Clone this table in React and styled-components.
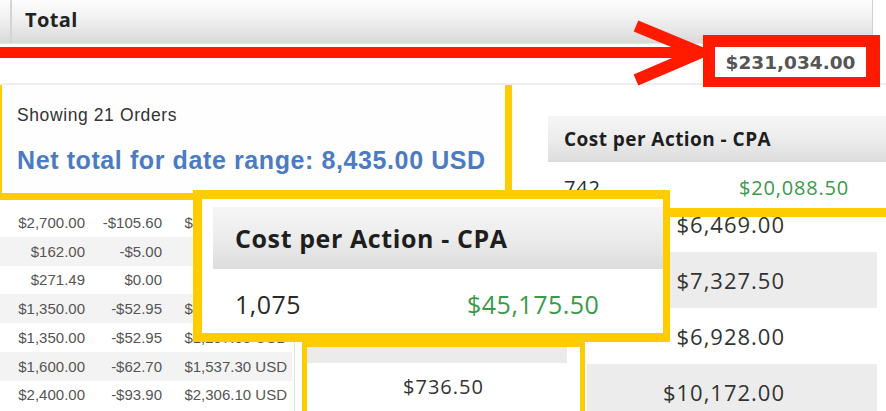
import React from "react";
import styled, { createGlobalStyle } from "styled-components";

const YELLOW = "#ffcc00";
const RED = "#ff1a00";
const GREEN = "#3a9a48";

const orders = [
  { gross: "$2,700.00", fee: "-$105.60", net: "$2,594.40 USD" },
  { gross: "$162.00", fee: "-$5.00", net: "$157.00 USD" },
  { gross: "$271.49", fee: "$0.00", net: "$271.49 USD" },
  { gross: "$1,350.00", fee: "-$52.95", net: "$1,297.05 USD" },
  { gross: "$1,350.00", fee: "-$52.95", net: "$1,297.05 USD" },
  { gross: "$1,600.00", fee: "-$62.70", net: "$1,537.30 USD" },
  { gross: "$2,400.00", fee: "-$93.90", net: "$2,306.10 USD" },
];

const campaignValues = ["$6,469.00", "$7,327.50", "$6,928.00", "$10,172.00"];

const GlobalStyle = createGlobalStyle`
  html, body {
    margin: 0;
    padding: 0;
    background: #ffffff;
  }
`;

const App = () => {
  return (
    <>
      <GlobalStyle />
      <Canvas>
        <TopStrip>
          <HeaderRow>
            <EdgeCell />
            <TotalCell>Total</TotalCell>
          </HeaderRow>
        </TopStrip>

        <Arrow viewBox="0 0 720 95" width="720" height="95">
          <line x1="0" y1="52.5" x2="700" y2="52.5" stroke={RED} strokeWidth="11" />
          <polyline
            points="636,26 700,52.5 636,80"
            fill="none"
            stroke={RED}
            strokeWidth="12"
            strokeLinejoin="miter"
          />
        </Arrow>

        <TotalBox>$231,034.00</TotalBox>

        <SmallCpa>
          <CpaHeader $small>Cost per Action - CPA</CpaHeader>
          <CpaRow $small>
            <span>742</span>
            <CpaMoney>$20,088.50</CpaMoney>
          </CpaRow>
        </SmallCpa>

        <OrdersPanel>
          <ShowingText>Showing 21 Orders</ShowingText>
          <NetTotal>Net total for date range: 8,435.00 USD</NetTotal>
        </OrdersPanel>

        <OrdersTable>
          {orders.map((o, i) => (
            <OrderRow key={i} $shaded={i % 2 === 1}>
              <OrderCell>{o.gross}</OrderCell>
              <OrderCell>{o.fee}</OrderCell>
              <OrderCell>{o.net}</OrderCell>
            </OrderRow>
          ))}
        </OrdersTable>

        <ValuesPanel>
          <ValuesList>
            {campaignValues.map((v, i) => (
              <ValueRow key={v} $shaded={i % 2 === 1}>
                {v}
              </ValueRow>
            ))}
          </ValuesList>
        </ValuesPanel>

        <DealPanel>
          <DealStripe />
          <DealValue>$736.50</DealValue>
        </DealPanel>

        <BigCpa>
          <CpaHeader>Cost per Action - CPA</CpaHeader>
          <CpaRow>
            <span>1,075</span>
            <CpaMoney>$45,175.50</CpaMoney>
          </CpaRow>
        </BigCpa>
      </Canvas>
    </>
  );
};

const Canvas = styled.div`
  position: relative;
  width: 886px;
  height: 411px;
  overflow: hidden;
  background: #ffffff;
  font-family: "Open Sans", "Liberation Sans", sans-serif;
`;

const TopStrip = styled.div`
  height: 85px;
  box-sizing: border-box;
  border-bottom: 2px solid #eeeeee;
`;

const HeaderRow = styled.div`
  display: flex;
  width: 873px;
  height: 44px;
  box-sizing: border-box;
  border-right: 1px solid #d2d2d2;
  border-bottom: 1px solid #e6e6e6;
  background: linear-gradient(#fdfdfd 0%, #f0f0f0 45%, #d9d9d9 100%);
`;

const EdgeCell = styled.div`
  width: 10px;
  border-right: 2px solid #d4d4d4;
`;

const TotalCell = styled.div`
  flex: 1;
  display: flex;
  align-items: center;
  padding-left: 13px;
  padding-bottom: 4px;
  font-size: 20px;
  font-weight: 700;
  letter-spacing: 0.4px;
  color: #222;
`;

const Arrow = styled.svg`
  position: absolute;
  left: 0;
  top: 0;
`;

const TotalBox = styled.div`
  position: absolute;
  left: 703px;
  top: 35px;
  width: 177px;
  height: 52px;
  box-sizing: border-box;
  border: 12px solid ${RED};
  border-bottom-width: 10px;
  border-right-width: 14px;
  background: #ffffff;
  display: flex;
  align-items: center;
  justify-content: center;
  font-family: "DejaVu Sans", sans-serif;
  font-weight: 700;
  font-size: 18.5px;
  color: #555;
`;

const OrdersPanel = styled.div`
  position: absolute;
  left: 0;
  top: 85px;
  width: 512px;
  height: 115px;
  box-sizing: border-box;
  background: #fefefe;
  border-left: 2px solid ${YELLOW};
  border-right: 7px solid ${YELLOW};
  border-bottom: 7px solid ${YELLOW};
  padding: 20px 0 0 15px;
  display: flex;
  flex-direction: column;
  gap: 20px;
  font-family: "Liberation Sans", Arial, sans-serif;
`;

const ShowingText = styled.div`
  font-size: 17.5px;
  line-height: 20px;
  letter-spacing: 0.6px;
  color: #333;
`;

const NetTotal = styled.div`
  font-size: 25px;
  line-height: 30px;
  font-weight: 700;
  letter-spacing: 0.6px;
  color: #4b7bc5;
  white-space: nowrap;
`;

const SmallCpa = styled.div`
  position: absolute;
  left: 548px;
  top: 116px;
  right: 0;
  height: 100px;
  background: #ffffff;
`;

const CpaHeader = styled.div`
  display: flex;
  align-items: center;
  height: ${(p) => (p.$small ? 46 : 62)}px;
  padding-left: ${(p) => (p.$small ? 16 : 22)}px;
  background: linear-gradient(#f6f6f6 0%, #ececec 50%, #dcdcdc 100%);
  font-size: ${(p) => (p.$small ? 19 : 25)}px;
  letter-spacing: ${(p) => (p.$small ? 0.45 : 0.6)}px;
  font-weight: 700;
  color: #1e1e1e;
  white-space: nowrap;
`;

const CpaRow = styled.div`
  display: grid;
  grid-template-columns: ${(p) => (p.$small ? 175 : 232)}px auto;
  padding-left: ${(p) => (p.$small ? 16 : 22)}px;
  margin-top: ${(p) => (p.$small ? 14 : 18)}px;
  font-size: ${(p) => (p.$small ? 20 : 25)}px;
  line-height: ${(p) => (p.$small ? 24 : 34)}px;
  letter-spacing: ${(p) => (p.$small ? 0.8 : 0.5)}px;
  color: #2a2a2a;
`;

const CpaMoney = styled.span`
  color: ${GREEN};
`;

const OrdersTable = styled.div`
  position: absolute;
  left: 0;
  top: 200px;
  width: 295px;
  bottom: 0;
  box-sizing: border-box;
  padding-top: 8px;
  border-right: 1px solid #e2e2e2;
  background: #ffffff;
  font-family: "Liberation Sans", Arial, sans-serif;
  font-size: 15px;
  color: #555;
`;

const OrderRow = styled.div`
  display: grid;
  grid-template-columns: 85px 77px 125px;
  align-items: center;
  height: 28.75px;
  margin-right: 2px;
  background: ${(p) => (p.$shaded ? "#f3f3f3" : "#ffffff")};
`;

const OrderCell = styled.span`
  text-align: right;
  white-space: nowrap;
`;

const ValuesPanel = styled.div`
  position: absolute;
  left: 580px;
  top: 208px;
  right: 0;
  bottom: 0;
  border-top: 9px solid ${YELLOW};
  border-left: 5px solid ${YELLOW};
  background: #ffffff;
  overflow: hidden;
`;

const ValuesList = styled.div`
  margin-top: -21px;
  display: flex;
  flex-direction: column;
`;

const ValueRow = styled.div`
  height: 56px;
  display: flex;
  align-items: center;
  justify-content: flex-end;
  margin: 0 9px 0 2px;
  padding-right: 92px;
  background: ${(p) => (p.$shaded ? "#ececec" : "#ffffff")};
  font-size: 22px;
  letter-spacing: 1px;
  color: #333;
`;

const DealPanel = styled.div`
  position: absolute;
  left: 302px;
  top: 338px;
  width: 283px;
  bottom: 0;
  box-sizing: border-box;
  border-top: 9px solid ${YELLOW};
  border-left: 5px solid ${YELLOW};
  border-right: 5px solid ${YELLOW};
  background: #ffffff;
`;

const DealStripe = styled.div`
  height: 16px;
  margin-right: 13px;
  background: #ebebeb;
`;

const DealValue = styled.div`
  margin-top: 11px;
  text-align: center;
  font-size: 20px;
  line-height: 26px;
  letter-spacing: 1px;
  color: #333;
`;

const BigCpa = styled.div`
  position: absolute;
  left: 193px;
  top: 190px;
  width: 477px;
  height: 152px;
  box-sizing: border-box;
  border: 9px solid ${YELLOW};
  border-right-width: 7px;
  background: #ffffff;
  padding: 8px 0 0 11px;
`;

export default App;
